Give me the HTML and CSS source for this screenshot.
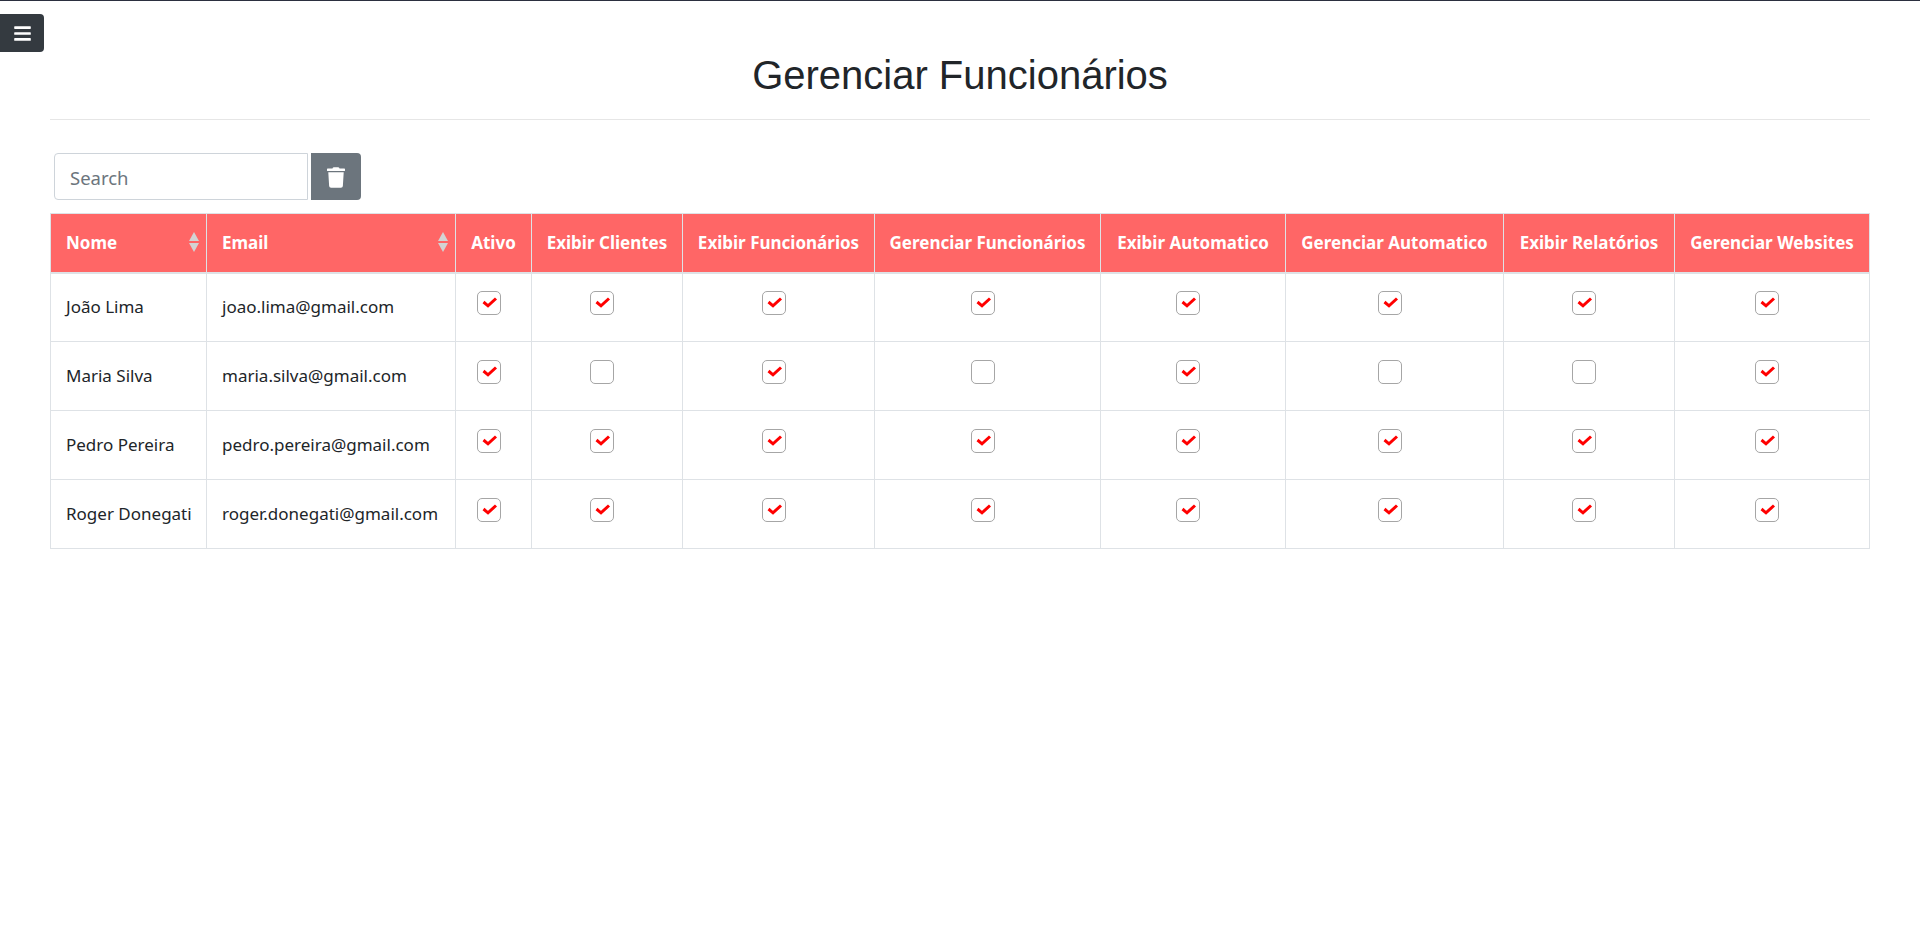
FILE: index.html
```html
<!DOCTYPE html>
<html lang="pt-BR">
<head>
<meta charset="utf-8">
<title>Gerenciar Funcionários</title>
<link rel="stylesheet" href="styles.css">
</head>
<body>
<button class="menu-btn" type="button" aria-label="Menu">
  <svg viewBox="0 0 448 512" class="menu-icon"><path fill="currentColor" d="M16 132h416c8.837 0 16-7.163 16-16V76c0-8.837-7.163-16-16-16H16C7.163 60 0 67.163 0 76v40c0 8.837 7.163 16 16 16zm0 160h416c8.837 0 16-7.163 16-16v-40c0-8.837-7.163-16-16-16H16c-8.837 0-16 7.163-16 16v40c0 8.837 7.163 16 16 16zm0 160h416c8.837 0 16-7.163 16-16v-40c0-8.837-7.163-16-16-16H16c-8.837 0-16 7.163-16 16v40c0 8.837 7.163 16 16 16z"/></svg>
</button>
<main class="content">
  <h1 class="title">Gerenciar Funcionários</h1>
  <hr class="rule">
  <div class="toolbar">
    <input class="search" type="text" placeholder="Search">
    <button class="clear-btn" type="button" aria-label="Limpar">
      <svg viewBox="0 0 448 512" class="trash-icon"><path fill="currentColor" d="M432 32H312l-9.400-18.700A24 24 0 0 0 281.100 0H166.800a23.720 23.720 0 0 0-21.400 13.300L136 32H16A16 16 0 0 0 0 48v32a16 16 0 0 0 16 16h416a16 16 0 0 0 16-16V48a16 16 0 0 0-16-16zM53.200 467a48 48 0 0 0 47.900 45h245.800a48 48 0 0 0 47.900-45L416 128H32z"/></svg>
    </button>
  </div>
  <table class="grid">
    <colgroup>
      <col class="c1"><col class="c2"><col class="c3"><col class="c4"><col class="c5"><col class="c6"><col class="c7"><col class="c8"><col class="c9"><col class="c10">
    </colgroup>
    <thead>
      <tr>
        <th class="sortable">Nome<span class="sort"></span></th>
        <th class="sortable">Email<span class="sort"></span></th>
        <th>Ativo</th>
        <th>Exibir Clientes</th>
        <th>Exibir Funcionários</th>
        <th>Gerenciar Funcionários</th>
        <th>Exibir Automatico</th>
        <th>Gerenciar Automatico</th>
        <th>Exibir Relatórios</th>
        <th>Gerenciar Websites</th>
      </tr>
    </thead>
    <tbody>
      <tr>
        <td>João Lima</td><td>joao.lima@gmail.com</td>
        <td class="chk"><input type="checkbox" checked></td><td class="chk"><input type="checkbox" checked></td><td class="chk"><input type="checkbox" checked></td><td class="chk"><input type="checkbox" checked></td><td class="chk"><input type="checkbox" checked></td><td class="chk"><input type="checkbox" checked></td><td class="chk"><input type="checkbox" checked></td><td class="chk"><input type="checkbox" checked></td>
      </tr>
      <tr>
        <td>Maria Silva</td><td>maria.silva@gmail.com</td>
        <td class="chk"><input type="checkbox" checked></td><td class="chk"><input type="checkbox"></td><td class="chk"><input type="checkbox" checked></td><td class="chk"><input type="checkbox"></td><td class="chk"><input type="checkbox" checked></td><td class="chk"><input type="checkbox"></td><td class="chk"><input type="checkbox"></td><td class="chk"><input type="checkbox" checked></td>
      </tr>
      <tr>
        <td>Pedro Pereira</td><td>pedro.pereira@gmail.com</td>
        <td class="chk"><input type="checkbox" checked></td><td class="chk"><input type="checkbox" checked></td><td class="chk"><input type="checkbox" checked></td><td class="chk"><input type="checkbox" checked></td><td class="chk"><input type="checkbox" checked></td><td class="chk"><input type="checkbox" checked></td><td class="chk"><input type="checkbox" checked></td><td class="chk"><input type="checkbox" checked></td>
      </tr>
      <tr>
        <td>Roger Donegati</td><td>roger.donegati@gmail.com</td>
        <td class="chk"><input type="checkbox" checked></td><td class="chk"><input type="checkbox" checked></td><td class="chk"><input type="checkbox" checked></td><td class="chk"><input type="checkbox" checked></td><td class="chk"><input type="checkbox" checked></td><td class="chk"><input type="checkbox" checked></td><td class="chk"><input type="checkbox" checked></td><td class="chk"><input type="checkbox" checked></td>
      </tr>
    </tbody>
  </table>
</main>
</body>
</html>
```
FILE: styles.css
```css
* { box-sizing: border-box; }
html, body { margin: 0; padding: 0; }
body {
  min-height: 947px;
  background: #fff;
  border-top: 1px solid #2b2f3f;
  color: #212529;
  font-family: "Noto Sans", "Open Sans", sans-serif;
  font-size: 17px;
  overflow: hidden;
}
.menu-btn {
  position: absolute;
  top: 14px;
  left: 0;
  width: 44px;
  height: 38px;
  display: flex;
  align-items: center;
  justify-content: center;
  padding: 0;
  border: 0;
  border-radius: 0 4px 4px 0;
  background: #343a40;
  color: #fff;
}
.menu-icon { width: 17px; height: 19px; display: block; }
.content { padding: 0 50px; }
.title {
  margin: 0;
  padding-top: 50px;
  height: 118px;
  font-family: "Liberation Sans", Arial, sans-serif;
  font-size: 40px;
  font-weight: 400;
  line-height: 48px;
  text-align: center;
  color: #212529;
}
.rule { margin: 0; border: 0; border-top: 1px solid #e6e6e6; }
.toolbar {
  display: flex;
  gap: 3px;
  margin-top: 33px;
  margin-left: 4px;
  height: 47px;
}
.search {
  width: 254px;
  height: 47px;
  padding: 2px 15px 0;
  border: 1px solid #ced4da;
  border-radius: 4px 0 0 4px;
  font-family: inherit;
  font-size: 18.500px;
  color: #495057;
  background: #fff;
}
.search::placeholder { color: #6c757d; opacity: 1; }
.clear-btn {
  width: 50px;
  height: 47px;
  display: flex;
  align-items: center;
  justify-content: center;
  padding: 2px 0 0;
  border: 0;
  border-radius: 0 4px 4px 0;
  background: #6c757d;
  color: #fff;
}
.trash-icon { width: 18px; height: 21px; display: block; }
.grid {
  margin-top: 13px;
  width: 1819px;
  table-layout: fixed;
  border-collapse: collapse;
  font-size: 17px;
}
.c1 { width: 156px; }
.c2 { width: 249px; }
.c3 { width: 76px; }
.c4 { width: 151px; }
.c5 { width: 192px; }
.c6 { width: 226px; }
.c7 { width: 185px; }
.c8 { width: 218px; }
.c9 { width: 171px; }
.c10 { width: 195px; }
.grid th {
  position: relative;
  height: 59px;
  padding: 0;
  background: #ff6666;
  color: #fff;
  font-weight: 700;
  font-size: 17px;
  text-align: center;
  border: 1px solid #dee2e6;
  border-bottom-width: 2px;
  white-space: nowrap;
}
.grid th.sortable { text-align: left; padding-left: 15px; }
.sort {
  position: absolute;
  right: 6px;
  top: 18px;
  width: 11px;
  height: 20px;
}
.sort::before, .sort::after {
  content: "";
  position: absolute;
  left: 0;
  border-left: 5.500px solid transparent;
  border-right: 5.500px solid transparent;
}
.sort::before { top: 0; border-bottom: 9px solid #d3d3d3; }
.sort::after { bottom: 0; border-top: 9px solid #d3d3d3; }
.grid td {
  height: 69px;
  padding: 0 15px 2px;
  border: 1px solid #dee2e6;
  white-space: nowrap;
  vertical-align: middle;
}
.grid td.chk { padding: 0 10px 9px 0; text-align: center; }
.chk input {
  appearance: none;
  display: inline-block;
  width: 24px;
  height: 24px;
  margin: 0;
  vertical-align: middle;
  border: 1px solid #a6a6a6;
  border-radius: 5px;
  background: #fff;
}
.chk input:checked {
  background-image: url("data:image/svg+xml,%3Csvg xmlns='http://www.w3.org/2000/svg' width='22' height='22' viewBox='0 0 22 22'%3E%3Cpath d='M5.500 10 L10 13.800 L18 6.500' fill='none' stroke='%23ff0000' stroke-width='3'/%3E%3C/svg%3E");
  background-repeat: no-repeat;
  background-position: center;
}
```
